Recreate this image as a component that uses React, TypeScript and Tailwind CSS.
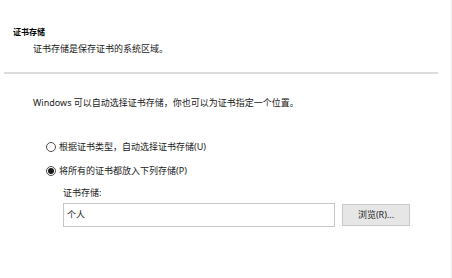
import React from "react";

function Radio({ checked, label }: { checked?: boolean; label: string }) {
  return (
    <div className="flex items-center h-[14px] pl-[46px]">
      <span className="w-[10px] h-[10px] rounded-full border border-[#4d4d4d] bg-white flex items-center justify-center">
        {checked && <span className="w-[6px] h-[6px] rounded-full bg-[#1a1a1a]" />}
      </span>
      <span className="ml-[3px] text-[9px] leading-[14px]">{label}</span>
    </div>
  );
}

export default function App() {
  return (
    <div
      className="w-[452px] h-[278px] bg-white text-[#222] flex flex-col border-r border-[#ececec] overflow-hidden"
      style={{ fontFamily: '"Noto Sans", "Noto Sans CJK SC", sans-serif' }}
    >
      <div className="pt-[26px] pl-[13px] text-[8px] leading-[12px] font-bold text-black">
        证书存储
      </div>
      <div className="mt-[5px] pl-[33px] text-[9px] leading-[12px]">
        证书存储是保存证书的系统区域。
      </div>
      <div className="mt-[17px] ml-[4px] w-[434px] h-[2px] bg-[#dcdcdc]" />

      <div className="mt-[22px] pl-[33px] text-[9px] leading-[14px]">
        Windows 可以自动选择证书存储，你也可以为证书指定一个位置。
      </div>

      <div className="mt-[30px]">
        <Radio label="根据证书类型，自动选择证书存储(U)" />
      </div>
      <div className="mt-[10px]">
        <Radio checked label="将所有的证书都放入下列存储(P)" />
      </div>

      <div className="mt-[8px] pl-[63px] text-[9px] leading-[14px]">证书存储:</div>
      <div className="mt-[3px] pl-[63px] flex items-center gap-[7px]">
        <div className="w-[272px] h-[24px] border border-[#c6c6c6] bg-white flex items-center px-[3px] text-[9px]">
          个人
        </div>
        <button className="w-[68px] h-[22px] border border-[#c9c9c9] bg-[#e6e6e6] text-[9px] flex items-center justify-center">
          浏览(R)...
        </button>
      </div>
    </div>
  );
}
